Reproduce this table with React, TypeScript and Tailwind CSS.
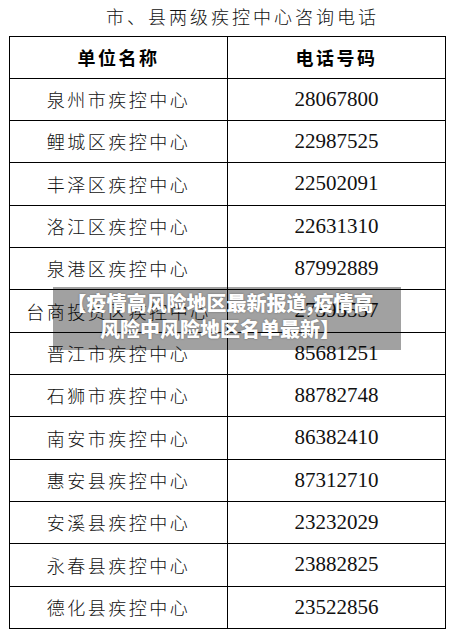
import React from "react";

const rows: [string, string][] = [
  ["泉州市疾控中心", "28067800"],
  ["鲤城区疾控中心", "22987525"],
  ["丰泽区疾控中心", "22502091"],
  ["洛江区疾控中心", "22631310"],
  ["泉港区疾控中心", "87992889"],
  ["台商投资区疾控中心", "27395537"],
  ["晋江市疾控中心", "85681251"],
  ["石狮市疾控中心", "88782748"],
  ["南安市疾控中心", "86382410"],
  ["惠安县疾控中心", "87312710"],
  ["安溪县疾控中心", "23232029"],
  ["永春县疾控中心", "23882825"],
  ["德化县疾控中心", "23522856"],
];

const cjk = "font-['Noto_Sans_CJK_SC',sans-serif]";

export default function App() {
  return (
    <div className="relative w-[455px] h-[637px] bg-white overflow-hidden">
      <div
        className={`h-[36px] flex items-center justify-center pl-[30px] pb-[3px] text-[18px] tracking-[3px] text-[#111] font-light ${cjk}`}
      >
        市、县两级疾控中心咨询电话
      </div>
      <div className="ml-[9px] w-[437px] border-l border-t border-black">
        <div className="grid grid-cols-[218px_218px] h-[42px]">
          <div
            className={`flex items-center justify-center border-r border-b border-black text-[18px] font-bold tracking-[2.5px] text-black ${cjk}`}
          >
            单位名称
          </div>
          <div
            className={`flex items-center justify-center border-r border-b border-black text-[18px] font-bold tracking-[2.5px] text-black ${cjk}`}
          >
            电话号码
          </div>
        </div>
        {rows.map(([name, phone], i) => (
          <div
            key={name}
            className={
              i % 3 === 2
                ? "grid grid-cols-[218px_218px] h-[43px]"
                : "grid grid-cols-[218px_218px] h-[42px]"
            }
          >
            <div
              className={`flex items-center justify-center border-r border-b border-black text-[18px] font-light tracking-[2.5px] text-[#111] ${cjk}`}
            >
              {name}
            </div>
            <div className="flex items-center justify-center border-r border-b border-black text-[21px] text-[#111] font-['Liberation_Serif',serif]">
              {phone}
            </div>
          </div>
        ))}
      </div>
      <div
        className={`absolute left-[53px] top-[287px] w-[348px] h-[63px] bg-[rgba(0,0,0,0.37)] pt-[3px] pr-[14px] text-white font-black text-[20px] leading-[26px] text-center [text-shadow:0_0_2px_rgba(0,0,0,0.4)] ${cjk}`}
      >
        <div>【疫情高风险地区最新报道,疫情高</div>
        <div>风险中风险地区名单最新】</div>
      </div>
    </div>
  );
}
